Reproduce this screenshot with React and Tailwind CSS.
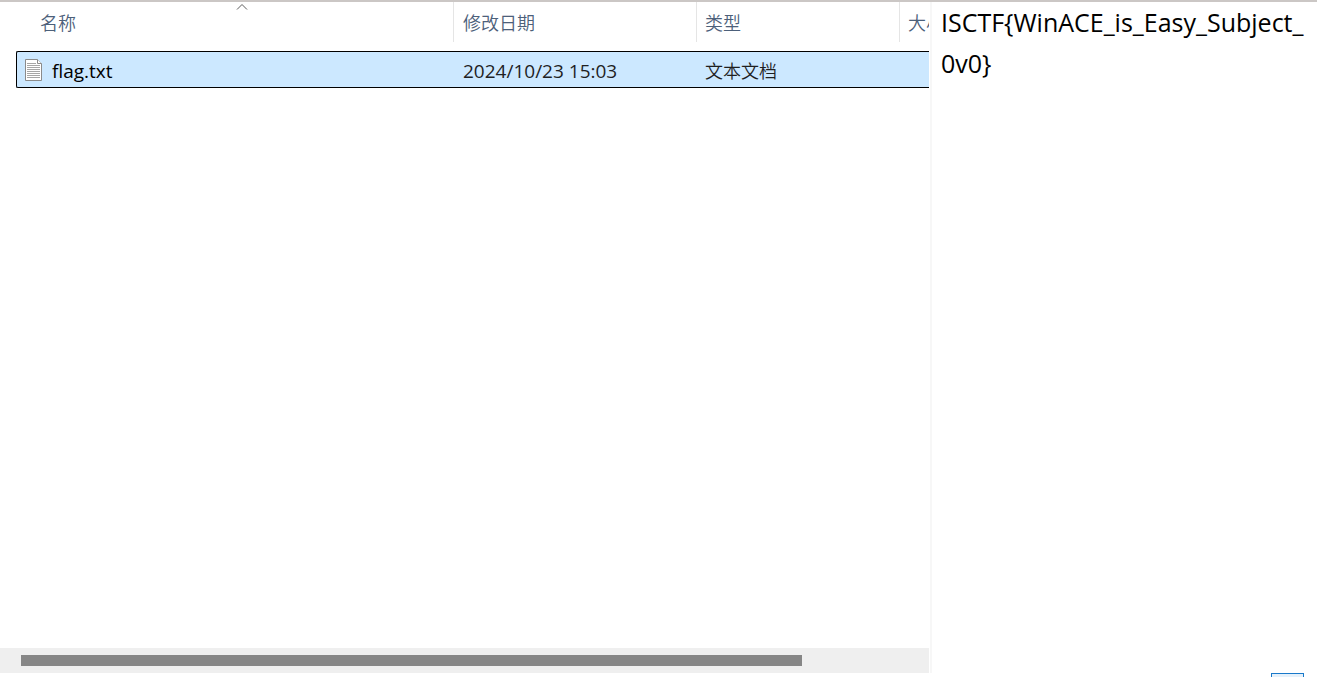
import React, { useState } from 'react'

const columns = [
  { id: 'name', label: '名称', width: 'w-[438px]', pad: 'pl-6' },
  { id: 'modified', label: '修改日期', width: 'w-[243px]', pad: 'pl-[9px]' },
  { id: 'type', label: '类型', width: 'w-[203px]', pad: 'pl-2' },
  { id: 'size', label: '大小', width: 'w-[180px]', pad: 'pl-2' },
]

const files = [
  { name: 'flag.txt', modified: '2024/10/23 15:03', type: '文本文档', content: 'ISCTF{WinACE_is_Easy_Subject_0v0}' },
]

function TextFileIcon() {
  return (
    <svg width="18" height="22" viewBox="0 0 18 22" className="shrink-0" aria-hidden="true">
      <path d="M.5.5h12l4 4v17H.5z" fill="#fff" stroke="#8b8b8b" />
      <path d="M12.5.5v4h4" fill="#fff" stroke="#8b8b8b" />
      <path d="M2 4.5h9M2 6.5h13M2 8.5h13M2 10.5h13M2 12.5h13M2 14.5h13M2 16.5h13M2 18.5h13" stroke="#a6a6a6" />
    </svg>
  )
}

function SortArrow() {
  return (
    <svg width="14" height="7" viewBox="0 0 14 7" className="absolute left-1/2 top-px" aria-hidden="true">
      <path d="M2 6.5l5-5 5 5" fill="none" stroke="#5c5c5c" />
    </svg>
  )
}

function FileList({ selected, onSelect }) {
  return (
    <div className="flex-1 overflow-hidden pl-4">
      <table className="w-[1064px] table-fixed border-separate border-spacing-0 text-left">
        <thead>
          <tr>
            {columns.map(col => (
              <th key={col.id} className={`${col.width} p-0 pb-[9px] font-[350]`}>
                <button
                  className={`relative block h-10 w-full border-r border-[#e5e5e5] pt-[2px] text-left text-[18px] text-[#4c607a] ${col.pad}`}
                >
                  {col.id === 'name' && <SortArrow />}
                  {col.label}
                </button>
              </th>
            ))}
          </tr>
        </thead>
        <tbody>
          {files.map((file, i) => (
            <tr
              key={file.name}
              onClick={() => onSelect(i)}
              className={`h-[37px] text-[19px] leading-6 text-[#1f1f1f] ${i === selected ? 'bg-[#cce8ff]' : ''}`}
            >
              <td className="rounded-l-[2px] border-y border-l border-black p-0 pl-2">
                <div className="flex items-center gap-[9px] text-black">
                  <TextFileIcon />
                  <span className="pt-[2px]">{file.name}</span>
                </div>
              </td>
              <td className="border-y border-black p-0 pl-[9px] pt-[2px]">{file.modified}</td>
              <td className="border-y border-black p-0 pl-2 pt-[2px] text-[18px] font-[350]">{file.type}</td>
              <td className="border-y border-black p-0" />
            </tr>
          ))}
        </tbody>
      </table>
    </div>
  )
}

export default function App() {
  const [selected, setSelected] = useState(0)

  return (
    <div className="flex h-screen flex-col border-t-2 border-[#cbc7c5] bg-white font-['Open_Sans','Noto_Sans_CJK_SC',sans-serif]">
      <div className="flex min-h-0 flex-1">
        <main className="mr-px flex min-w-0 flex-1 flex-col">
          <FileList selected={selected} onSelect={setSelected} />
          {/* Horizontal scrollbar */}
          <div className="flex h-[25px] items-center bg-[#efefef] px-[21px]">
            <div className="h-[11px] w-[88%] bg-[#868686]" />
          </div>
        </main>

        {/* Preview pane */}
        <aside className="w-[387px] shrink-0 border-l-2 border-[#f7f7f7] pl-[9px] pr-2">
          <p className="break-all text-[25px] leading-[41px] text-black">{files[selected].content}</p>
        </aside>
      </div>

      {/* Status bar */}
      <footer className="flex h-1 shrink-0 justify-end overflow-hidden pr-[13px]">
        <button aria-label="详细信息" className="h-6 w-[33px] shrink-0 border border-[#1979ca] bg-[#e5f1fb]" />
      </footer>
    </div>
  )
}
